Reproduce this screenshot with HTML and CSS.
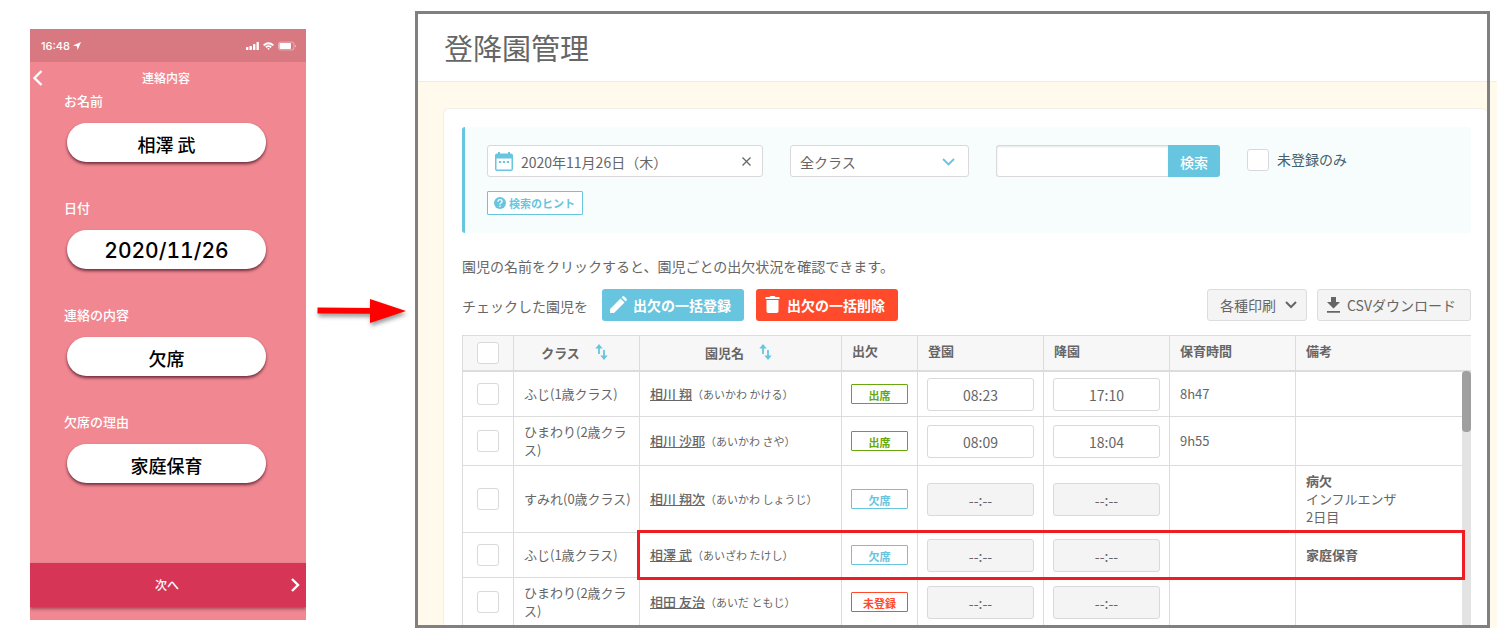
FILE: index.html
```html
<!DOCTYPE html>
<html lang="ja">
<head>
<meta charset="utf-8">
<title>登降園管理</title>
<link rel="stylesheet" href="styles.css">
</head>
<body>
<section class="phone">
  <div class="status">
    <span class="clock">16:48
      <svg width="8" height="8" viewBox="0 0 8 8"><path d="M8 0 4.600 8 3.900 4.200 0 3.500z" fill="#fff"/></svg>
    </span>
    <svg width="51" height="10" viewBox="0 0 51 10" fill="#fff">
      <rect x="0" y="6" width="2.400" height="3" rx=".5"/><rect x="3.500" y="5" width="2.400" height="4" rx=".5"/><rect x="7" y="3" width="2.400" height="6" rx=".5"/><rect x="10.500" y="1" width="2.400" height="8" rx=".5"/>
      <path d="M17 3.700Q22.500-1 28 3.700L26.700 5Q22.500 1.500 18.300 5zM19.200 5.600Q22.500 2.900 25.800 5.600L24.500 6.900Q22.500 5.300 20.500 6.900zM21.200 7.400Q22.500 6.600 23.800 7.400L22.500 8.900z"/>
      <rect x="32.500" y="1.100" width="15.500" height="7.800" rx="2" fill="none" stroke="#fff" stroke-opacity=".5" stroke-width=".8"/><rect x="33.500" y="2.100" width="11.500" height="5.800" rx="1"/><path d="M49 3.800v2.400q1-.4 1-1.200t-1-1.200z" opacity=".5"/>
    </svg>
  </div>
  <div class="nav">
    <button class="back" type="button" aria-label="戻る"><svg width="12" height="16" viewBox="0 0 12 16" fill="none" stroke="#fff" stroke-width="2.400"><path d="M10.500 1 3.500 8l7 7"/></svg></button>
    <h2>連絡内容</h2>
  </div>
  <form class="entry">
    <label for="p-name">お名前</label>
    <input class="pill" id="p-name" value="相澤 武" readonly>
    <label for="p-date">日付</label>
    <input class="pill pill-date" id="p-date" value="2020/11/26" readonly>
    <label for="p-kind">連絡の内容</label>
    <input class="pill" id="p-kind" value="欠席" readonly>
    <label for="p-why">欠席の理由</label>
    <input class="pill" id="p-why" value="家庭保育" readonly>
  </form>
  <button class="next" type="button">次へ<svg class="next-arrow" width="10" height="16" viewBox="0 0 10 16" fill="none" stroke="#fff" stroke-width="2.400"><path d="m2 2 6 6-6 6"/></svg></button>
</section>

<svg class="arrow" width="97" height="36" viewBox="0 0 97 36"><path d="M2.500 9.500 55 10V1l36 12-36 12v-9.200L2.500 15.500z" fill="#f00"/></svg>

<div class="window">
  <main class="frame">
    <header class="top"><h1>登降園管理</h1></header>
    <div class="page">
      <div class="card">
        <form class="search">
          <div class="filters">
            <div class="datebox">
              <svg width="18" height="19" viewBox="0 0 18 19"><path d="M3 0h2v1.500h8V0h2v1.500h1a2 2 0 0 1 2 2V17a2 2 0 0 1-2 2H2a2 2 0 0 1-2-2V3.500a2 2 0 0 1 2-2h1zM1.500 6.500v11h15v-11z" fill="#67c5df" fill-rule="evenodd"/><path d="M4 9h2.200v2H4zm3.900 0h2.200v2H7.900zm3.900 0H14v2h-2.200z" fill="#67c5df"/></svg>
              <input type="text" value="2020年11月26日（木）" aria-label="日付">
              <button type="button" aria-label="クリア"><svg width="9" height="9" viewBox="0 0 9 9" stroke="#666" stroke-width="1.300"><path d="m.5.5 8 8m0-8-8 8"/></svg></button>
            </div>
            <div class="selectbox">
              <select aria-label="クラス"><option>全クラス</option></select>
              <svg width="13" height="8" viewBox="0 0 13 8" fill="none" stroke="#67c5df" stroke-width="1.800"><path d="m1 1 5.500 5.500L12 1"/></svg>
            </div>
            <div class="keyword"><input type="text" aria-label="キーワード"><button type="submit">検索</button></div>
            <label class="only"><input class="check" type="checkbox">未登録のみ</label>
          </div>
          <button class="hint" type="button"><svg width="12" height="12" viewBox="0 0 12 12"><circle cx="6" cy="6" r="6" fill="#67c5df"/><path d="M4 4.700Q4 2.700 6 2.700t2 1.700Q8 5.300 6.900 6 6 6.500 6 7.400" fill="none" stroke="#fff" stroke-width="1.300"/><circle cx="6" cy="9.200" r=".8" fill="#fff"/></svg>検索のヒント</button>
        </form>
        <p class="lead">園児の名前をクリックすると、園児ごとの出欠状況を確認できます。</p>
        <div class="actions">
          <span>チェックした園児を</span>
          <button class="btn blue" type="button"><svg width="18" height="18" viewBox="0 0 18 18" fill="#fff"><path d="M0 17v-4L10.500 2.500l4 4L4 17zM11.600 1.400 12.500.5q.9-.8 1.800 0l2.200 2.200q.8.900 0 1.800l-.9.900z"/></svg>出欠の一括登録</button>
          <button class="btn red" type="button"><svg width="18" height="18" viewBox="0 0 18 18" fill="#fff"><path d="M1.500 1H5.500L6.500 0h4l1 1h4v2h-14zM2.500 4h12v11.200q0 1.800-1.800 1.800H4.300q-1.800 0-1.800-1.800z"/></svg>出欠の一括削除</button>
          <button class="btn gray print" type="button">各種印刷<svg width="12" height="8" viewBox="0 0 12 8" fill="none" stroke="#666" stroke-width="2"><path d="m1 1 5 5 5-5"/></svg></button>
          <button class="btn gray csv" type="button"><svg width="13" height="16" viewBox="0 0 13 16" fill="#666"><path d="M4 0h5v5h4l-6.500 6.500L0 5h4zM0 14h13v1.800H0z"/></svg>CSVダウンロード</button>
        </div>
        <div class="list">
          <table>
            <colgroup><col class="c-check"><col class="c-class"><col class="c-name"><col class="c-state"><col class="c-time"><col class="c-time"><col class="c-time"><col></colgroup>
            <thead>
              <tr>
                <th class="mid"><input class="check" type="checkbox" aria-label="すべて選択"></th>
                <th class="sort">クラス<svg width="13" height="16" viewBox="0 0 13 16" fill="#67c5df"><path d="M4 0 .3 4.500h2.800V10h1.800V4.500h2.800zM9 16l3.700-4.500H9.900V6H8.100v5.500H5.300z"/></svg></th>
                <th class="sort">園児名<svg width="13" height="16" viewBox="0 0 13 16" fill="#67c5df"><path d="M4 0 .3 4.500h2.800V10h1.800V4.500h2.800zM9 16l3.700-4.500H9.900V6H8.100v5.500H5.300z"/></svg></th>
                <th>出欠</th><th>登園</th><th>降園</th><th>保育時間</th><th>備考</th>
              </tr>
            </thead>
            <tbody>
              <tr>
                <td class="mid"><input class="check" type="checkbox" aria-label="相川 翔"></td>
                <td>ふじ(1歳クラス)</td>
                <td><a href="#">相川 翔</a><small>（あいかわ かける）</small></td>
                <td class="cell"><span class="tag green">出席</span></td>
                <td class="cell"><input class="time" value="08:23" aria-label="登園"></td>
                <td class="cell"><input class="time" value="17:10" aria-label="降園"></td>
                <td>8h47</td><td></td>
              </tr>
              <tr>
                <td class="mid"><input class="check" type="checkbox" aria-label="相川 沙耶"></td>
                <td>ひまわり(2歳クラス)</td>
                <td><a href="#">相川 沙耶</a><small>（あいかわ さや）</small></td>
                <td class="cell"><span class="tag green">出席</span></td>
                <td class="cell"><input class="time" value="08:09" aria-label="登園"></td>
                <td class="cell"><input class="time" value="18:04" aria-label="降園"></td>
                <td>9h55</td><td></td>
              </tr>
              <tr>
                <td class="mid"><input class="check" type="checkbox" aria-label="相川 翔次"></td>
                <td>すみれ(0歳クラス)</td>
                <td><a href="#">相川 翔次</a><small>（あいかわ しょうじ）</small></td>
                <td class="cell"><span class="tag sky">欠席</span></td>
                <td class="cell"><input class="time" value="--:--" aria-label="登園" disabled></td>
                <td class="cell"><input class="time" value="--:--" aria-label="降園" disabled></td>
                <td></td><td><b>病欠</b><br>インフルエンザ<br>2日目</td>
              </tr>
              <tr class="marked">
                <td class="mid"><span class="marker"></span><input class="check" type="checkbox" aria-label="相澤 武"></td>
                <td>ふじ(1歳クラス)</td>
                <td><a href="#">相澤 武</a><small>（あいざわ たけし）</small></td>
                <td class="cell"><span class="tag sky">欠席</span></td>
                <td class="cell"><input class="time" value="--:--" aria-label="登園" disabled></td>
                <td class="cell"><input class="time" value="--:--" aria-label="降園" disabled></td>
                <td></td><td><b>家庭保育</b></td>
              </tr>
              <tr>
                <td class="mid"><input class="check" type="checkbox" aria-label="相田 友治"></td>
                <td>ひまわり(2歳クラス)</td>
                <td><a href="#">相田 友治</a><small>（あいだ ともじ）</small></td>
                <td class="cell"><span class="tag orange">未登録</span></td>
                <td class="cell"><input class="time" value="--:--" aria-label="登園" disabled></td>
                <td class="cell"><input class="time" value="--:--" aria-label="降園" disabled></td>
                <td></td><td></td>
              </tr>
            </tbody>
          </table>
          <div class="scroll"><div class="thumb"></div></div>
        </div>
      </div>
    </div>
  </main>
  <div class="edge"></div>
</div>
</body>
</html>
```
FILE: styles.css
```css
* { box-sizing: border-box; }
body {
  margin: 0;
  height: 100vh;
  padding: 11px 12px 13px 30px;
  display: flex;
  background: #fff;
  color: #666;
  font: 14px/20px "Noto Sans CJK JP", sans-serif;
  overflow: hidden;
}
button, input, select { font: inherit; color: inherit; margin: 0; padding: 0; border: 0; background: none; border-radius: 0; }
h1, h2, p { margin: 0; }
svg { flex: none; }

/* phone */
.phone {
  flex: none;
  width: 276px;
  margin: 18px 0 8px;
  padding-bottom: 13px;
  background: #f08791;
  color: #fff;
  display: flex;
  flex-direction: column;
  overflow: hidden;
}
.status {
  height: 33px;
  padding: 0 9px 0 11px;
  background: #d87982;
  display: flex;
  align-items: center;
  justify-content: space-between;
}
.clock { display: flex; align-items: center; gap: 3px; font: 500 11px/16px Inter, sans-serif; }
.nav { height: 32px; position: relative; }
.nav h2 { font-size: 12px; line-height: 32px; font-weight: 500; text-align: center; padding-right: 4px; }
.back { position: absolute; left: 1px; top: 8px; height: 16px; line-height: 0; }
.entry { display: flex; flex-direction: column; padding: 0 40px 0 37px; margin-top: -2px; }
.entry label { font-size: 13px; line-height: 18px; font-weight: 500; margin: 0 0 13px -3px; }
.pill {
  width: 100%;
  height: 39px;
  margin-bottom: 37px;
  padding-top: 2px;
  border-radius: 20px;
  background: #fff;
  color: #000;
  font-size: 18px;
  font-weight: 500;
  text-align: center;
  box-shadow: 0 2px 3px rgba(60, 10, 30, .7);
}
.pill-date { font-family: Inter, sans-serif; font-size: 21px; font-variant-numeric: tabular-nums; }
.next {
  position: relative;
  height: 44px;
  margin-top: auto;
  padding-right: 2px;
  background: #d73555;
  font-size: 12px;
  font-weight: 500;
  box-shadow: 0 2px 3px rgba(80, 20, 40, .5);
}
.next-arrow { position: absolute; right: 6px; top: 14px; }
.arrow { flex: none; margin: 287px 0 0 9px; filter: drop-shadow(1px 3px 2px rgba(0, 0, 0, .4)); }

/* admin window */
.window { flex: 1; min-width: 0; margin-left: 3px; display: flex; }
.frame { flex: 1; min-width: 0; border: 3px solid #808080; overflow: hidden; display: flex; flex-direction: column; }
.edge { width: 7px; margin-top: 70px; border-top: 1px solid #eee; background: #fffaec; }
.top { flex: none; height: 68px; padding: 0 26px; border-bottom: 1px solid #ececec; }
h1 { font-size: 29px; line-height: 67px; font-weight: 400; }
.page { flex: 1; min-height: 0; padding: 26px 0 0 25px; background: #fffaec; }
.card {
  height: 100%;
  padding: 18px 16px 0 18px;
  background: #fff;
  border: solid #f0efea;
  border-width: 1px 0 0 1px;
  border-radius: 6px 6px 0 0;
}
.search { padding: 18px 22px; background: #f7fdfd; border-left: 3px solid #67c5df; border-radius: 3px; }
.filters { display: flex; gap: 27px; align-items: flex-start; margin-bottom: 14px; }
.datebox, .selectbox { position: relative; display: flex; height: 32px; border: 1px solid #d9d9d9; border-radius: 3px; background: #fff; }
.datebox { width: 276px; align-items: center; padding: 0 11px 0 7px; gap: 8px; }
.datebox input { flex: 1; min-width: 0; height: 30px; padding-top: 1px; }
.datebox button { line-height: 0; }
.selectbox { width: 179px; }
.selectbox select { width: 100%; appearance: none; padding: 1px 30px 0 9px; }
.selectbox svg { position: absolute; right: 13px; top: 12px; pointer-events: none; }
.keyword { width: 224px; display: flex; }
.keyword input { flex: 1; min-width: 0; height: 32px; border: 1px solid #d9d9d9; border-right: 0; border-radius: 3px 0 0 3px; background: #fff; box-shadow: inset 0 1px 2px rgba(0, 0, 0, .1); }
.keyword button { width: 52px; height: 32px; padding-top: 1px; background: #67c5df; color: #fff; font-weight: 500; border-radius: 0 3px 3px 0; }
.only { display: flex; gap: 8px; margin-top: 4px; line-height: 20px; color: #44606b; }
.check { appearance: none; flex: none; display: block; width: 22px; height: 22px; border: 1px solid #d9d9d9; border-radius: 3px; background: #fff; }
.hint { display: flex; align-items: center; gap: 3px; width: 96px; height: 24px; padding-left: 6px; border: 1px solid #67c5df; border-radius: 1px; background: #fff; color: #67c5df; font-size: 11px; font-weight: 700; white-space: nowrap; }
.lead { margin: 23px 0 13px; }
.actions { display: flex; align-items: center; gap: 10px; height: 32px; margin-bottom: 14px; white-space: nowrap; }
.actions > span { padding: 1px 4px 0 0; }
.btn { display: flex; align-items: center; height: 32px; border-radius: 3px; }
.blue, .red { min-width: 142px; padding: 0 8px; gap: 5px; color: #fff; font-weight: 700; }
.blue { background: #67c5df; }
.red { background: #ff4a2c; margin-left: 2px; }
.gray { background: #f4f4f4; border: 1px solid #dcdcdc; padding: 0 11px 0 9px; gap: 7px; }
.print { min-width: 100px; margin-left: auto; padding: 0 9px 0 12px; justify-content: space-between; }
.csv { min-width: 154px; }

/* attendance table */
.list { position: relative; font-size: 13px; }
table { width: 100%; table-layout: fixed; border-collapse: separate; border-spacing: 0; line-height: 18px; }
.c-check { width: 51px; }
.c-class, .c-time { width: 126px; }
.c-name { width: 202px; }
.c-state { width: 76px; }
th, td { border: 0 solid #dcdcdc; border-left-width: 1px; text-align: left; }
th { height: 37px; padding: 0 10px 4px; border-top-width: 1px; border-bottom-width: 2px; background: #f7f7f7; font-weight: 700; }
.sort { padding: 0 4px 0 0; text-align: center; }
.sort svg { margin-left: 15px; vertical-align: -2px; }
td { height: 45px; padding: 6px 7px 6px 10px; border-bottom-width: 1px; }
.mid { padding: 0 0 0 14px; }
.cell { padding: 0 9px; }
td a { color: inherit; text-decoration: underline; font-weight: 500; }
small { font-size: 11px; }
.tag { display: block; width: 57px; height: 20px; border: 1px solid; border-radius: 1px; font-size: 11px; line-height: 20px; font-weight: 700; text-align: center; }
.green { color: #68a80e; }
.sky { color: #67c5df; }
.orange { color: #ff4a2c; }
.time { display: block; width: 107px; height: 33px; padding-top: 2px; border: 1px solid #d9d9d9; border-radius: 3px; text-align: center; font-size: 14px; }
.time:disabled { background: #f4f4f4; color: #666; }
.marked { position: relative; }
.marker { position: absolute; z-index: 2; left: 175px; right: 6px; top: -3px; bottom: -2px; border: 3px solid #ee1c23; pointer-events: none; }
.scroll { position: absolute; z-index: 1; top: 36px; right: 0; bottom: 0; width: 9px; background: #e3e3e3; }
.thumb { height: 61px; border-radius: 4px; background: #9f9f9f; }
```
